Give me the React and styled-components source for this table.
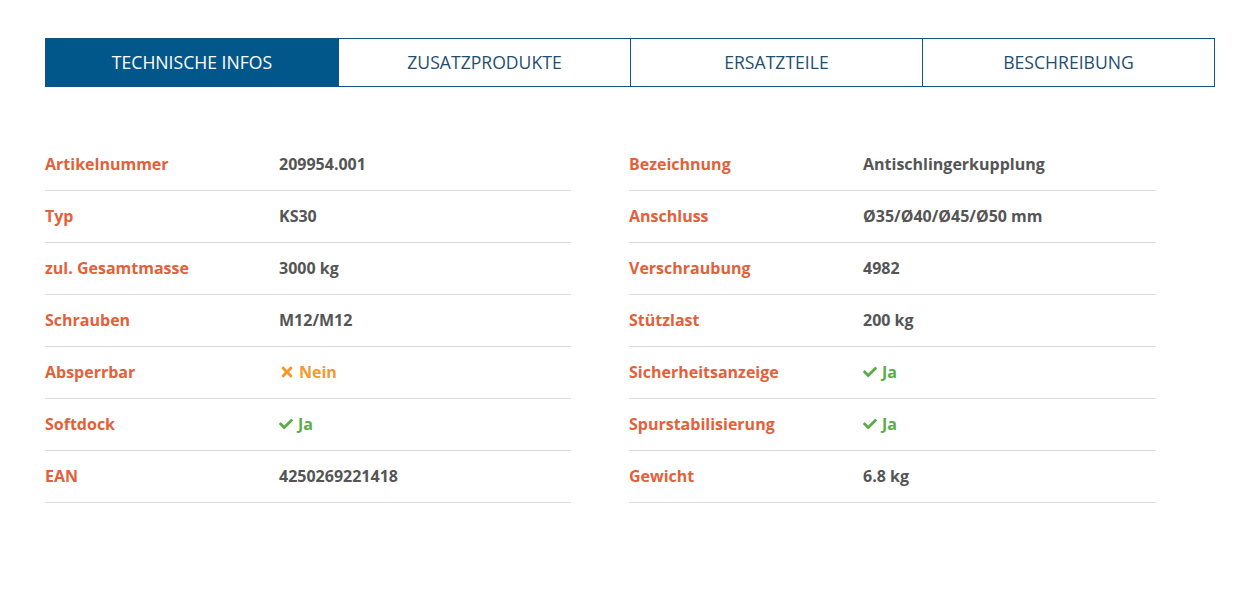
import React from "react";
import styled, { createGlobalStyle } from "styled-components";
import { FaCheck, FaTimes } from "react-icons/fa";

const Global = createGlobalStyle`
  html, body { margin: 0; padding: 0; background: #fff; }
  body { font-family: "Open Sans", "Noto Sans", sans-serif; }
`;

const Page = styled.div`
  padding: 38px 40px 0 45px;
`;

const Tabs = styled.div`
  display: grid;
  grid-template-columns: repeat(4, 1fr);
  border: 1px solid #0f5580;
  height: 49px;
  box-sizing: border-box;
`;

const Tab = styled.div`
  display: flex;
  align-items: center;
  justify-content: center;
  padding-bottom: 1px;
  font-size: 17.6px;
  text-transform: uppercase;
  color: ${(p) => (p.$active ? "#ffffff" : "#1f4e70")};
  background: ${(p) => (p.$active ? "#02578a" : "#ffffff")};
  border-left: ${(p) => (p.$first ? "none" : "1px solid #0f5580")};
`;

const Columns = styled.div`
  display: grid;
  grid-template-columns: 526px 527px;
  column-gap: 58px;
  margin-top: 52px;
`;

const Table = styled.div`
  display: flex;
  flex-direction: column;
`;

const Row = styled.div`
  display: grid;
  grid-template-columns: 234px 1fr;
  align-items: center;
  height: 52px;
  padding-bottom: 1px;
  border-bottom: 1px solid #dcdcdc;
  box-sizing: border-box;
  font-size: 16px;
  font-weight: 700;
`;

const Label = styled.div`
  color: #e2613a;
`;

const Value = styled.div`
  color: ${(p) => (p.$tone === "yes" ? "#5aad46" : p.$tone === "no" ? "#f39a2c" : "#555555")};
  display: flex;
  align-items: center;
  gap: 5px;
`;

const CheckIcon = styled(FaCheck)`
  font-size: 14px;
`;

const CrossIcon = styled(FaTimes)`
  font-size: 16px;
  margin-right: -1px;
`;

const left = [
  ["Artikelnummer", "209954.001"],
  ["Typ", "KS30"],
  ["zul. Gesamtmasse", "3000 kg"],
  ["Schrauben", "M12/M12"],
  ["Absperrbar", "no"],
  ["Softdock", "yes"],
  ["EAN", "4250269221418"],
];

const right = [
  ["Bezeichnung", "Antischlingerkupplung"],
  ["Anschluss", "Ø35/Ø40/Ø45/Ø50 mm"],
  ["Verschraubung", "4982"],
  ["Stützlast", "200 kg"],
  ["Sicherheitsanzeige", "yes"],
  ["Spurstabilisierung", "yes"],
  ["Gewicht", "6.8 kg"],
];

function Cell({ v }) {
  if (v === "yes")
    return (
      <Value $tone="yes">
        <CheckIcon /> Ja
      </Value>
    );
  if (v === "no")
    return (
      <Value $tone="no">
        <CrossIcon /> Nein
      </Value>
    );
  return <Value>{v}</Value>;
}

function SpecTable({ rows }) {
  return (
    <Table>
      {rows.map(([l, v]) => (
        <Row key={l}>
          <Label>{l}</Label>
          <Cell v={v} />
        </Row>
      ))}
    </Table>
  );
}

export default function App() {
  return (
    <Page>
      <Global />
      <Tabs>
        <Tab $active $first>Technische Infos</Tab>
        <Tab>Zusatzprodukte</Tab>
        <Tab>Ersatzteile</Tab>
        <Tab>Beschreibung</Tab>
      </Tabs>
      <Columns>
        <SpecTable rows={left} />
        <SpecTable rows={right} />
      </Columns>
    </Page>
  );
}
